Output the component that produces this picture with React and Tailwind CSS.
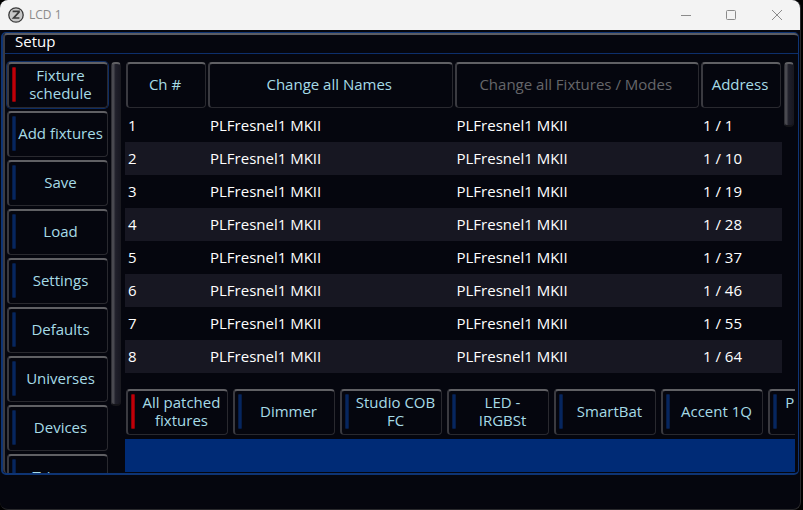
import React, { useState } from 'react';
import clsx from 'clsx';

const menuItems = [
  'Fixture schedule',
  'Add fixtures',
  'Save',
  'Load',
  'Settings',
  'Defaults',
  'Universes',
  'Devices',
  'Triggers',
];

const filters = [
  'All patched fixtures',
  'Dimmer',
  'Studio COB FC',
  'LED - IRGBSt',
  'SmartBat',
  'Accent 1Q',
  'PLFresnel1 MKII',
];

const fixtures = [1, 10, 19, 28, 37, 46, 55, 64, 73].map((address, i) => ({
  channel: i + 1,
  name: 'PLFresnel1 MKII',
  type: 'PLFresnel1 MKII',
  address: `1 / ${address}`,
}));

const PanelButton = ({ children, className, marker, active, focused, ...props }) => (
  <button
    type="button"
    className={clsx(
      'relative flex h-[46px] shrink-0 items-center justify-center rounded-[4px] border-t-2 border-r border-b border-l-2 border-t-[#606064] border-r-[#29292f] border-b-[#29292f] border-l-[#3a3a40] pb-1 text-center leading-[18px] text-[#a6dbe6] disabled:text-[#66666a]',
      focused && 'border-r-[#12397c] border-b-[#12397c] shadow-[0_0_0_1px_#0d2c63]',
      className
    )}
    {...props}
  >
    {marker && (
      <span
        className={clsx(
          'absolute top-[3px] bottom-[5px] left-[3px] w-1 rounded-[1px] border',
          active ? 'border-[#8c0008] bg-[#c00008]' : 'border-[#061c46] bg-[#06265f]'
        )}
      />
    )}
    {children}
  </button>
);

const ScrollThumb = ({ className }) => (
  <div
    className={clsx(
      'w-[10px] shrink-0 rounded-[4px] border-t-2 border-r border-b-2 border-l border-t-[#606064] border-r-[#1a1a20] border-b-[#15151a] border-l-[#303036] bg-linear-to-r from-[#494950] from-20% via-[#20202b] via-45% to-[#191923]',
      className
    )}
  />
);

const TitleBar = () => (
  <header className="flex h-[30px] shrink-0 items-center rounded-t-lg bg-[#f3f3f3] pl-2 text-[#8b8b8b]">
    <svg width="16" height="16" viewBox="0 0 16 16" aria-hidden="true">
      <circle cx="8" cy="8" r="7.2" fill="#c8c8c8" stroke="#3a3a3a" strokeWidth="1.3" />
      <path d="M4.6 4.3h6.4v.8L5.6 11h5.8" fill="none" stroke="#3a3a3a" strokeWidth="1.7" />
    </svg>
    <span className="ml-[5px] flex-1 text-xs">LCD 1</span>
    <button type="button" aria-label="Minimize" className="flex h-full w-[45px] items-center justify-center">
      <svg width="12" height="12" viewBox="0 0 12 12" fill="none" stroke="currentColor">
        <path d="M1 6.5h10" />
      </svg>
    </button>
    <button type="button" aria-label="Maximize" className="flex h-full w-[45px] items-center justify-center">
      <svg width="12" height="12" viewBox="0 0 12 12" fill="none" stroke="currentColor">
        <rect x="1.5" y="1.5" width="9" height="9" rx="1" />
      </svg>
    </button>
    <button type="button" aria-label="Close" className="flex h-full w-[47px] items-center justify-center">
      <svg width="12" height="12" viewBox="0 0 12 12" fill="none" stroke="currentColor">
        <path d="M1 1l10 10M11 1L1 11" />
      </svg>
    </button>
  </header>
);

const FixtureTable = () => (
  <table className="w-full table-fixed border-collapse text-left text-white">
    <colgroup>
      <col className="w-[82px]" />
      <col />
      <col />
      <col className="w-[82px]" />
    </colgroup>
    <thead>
      <tr>
        <th className="px-px pb-px font-normal">
          <PanelButton className="w-full pr-[3px]">Ch #</PanelButton>
        </th>
        <th className="px-px pb-px font-normal">
          <PanelButton className="w-full pr-[3px]">Change all Names</PanelButton>
        </th>
        <th className="px-px pb-px font-normal">
          <PanelButton className="w-full pr-[3px]" disabled>Change all Fixtures / Modes</PanelButton>
        </th>
        <th className="px-px pb-px font-normal">
          <PanelButton className="w-full pr-[3px]">Address</PanelButton>
        </th>
      </tr>
    </thead>
    <tbody>
      {fixtures.map((fixture) => (
        <tr key={fixture.channel} className="h-[33px] even:bg-[#171722]">
          <td className="px-[3px]">{fixture.channel}</td>
          <td className="px-[3px]">{fixture.name}</td>
          <td className="px-[3px]">{fixture.type}</td>
          <td className="px-[3px]">{fixture.address}</td>
        </tr>
      ))}
    </tbody>
  </table>
);

const App = () => {
  const [page, setPage] = useState('Fixture schedule');
  const [filter, setFilter] = useState('All patched fixtures');

  return (
    <div className="h-screen bg-black pr-[2px] font-['Open_Sans',sans-serif] text-[15px]">
      <div className="flex h-full flex-col rounded-lg border-r border-b border-[#29292c] bg-[#05060e]">
        <TitleBar />

        <main className="mx-px mt-[2px] mb-[34px] flex min-h-0 flex-1 flex-col rounded-[5px] border border-b-2 border-l-2 border-[#0e3474]">
          <div className="flex min-h-0 flex-1 flex-col rounded-[4px] border-t-2 border-l-2 border-t-[#5c5d63] border-l-[#3a3b43]">
            <h1 className="h-[19px] shrink-0 border-b border-[#0d2f6c] pl-[10px] leading-[12px] text-white">Setup</h1>

            <div className="flex min-h-0 flex-1 pt-2 pr-[3px] pb-px pl-[2px]">
              <nav className="flex w-[101px] shrink-0 flex-col gap-[3px] overflow-clip [overflow-clip-margin:1px]">
                {menuItems.map((item) => (
                  <PanelButton
                    key={item}
                    marker
                    className="pl-[5px]"
                    active={item === page}
                    focused={item === page}
                    onClick={() => setPage(item)}
                  >
                    {item}
                  </PanelButton>
                ))}
              </nav>
              <ScrollThumb className="ml-[3px] h-[344px]" />

              <section className="ml-1 flex min-w-0 flex-1 flex-col">
                <div className="flex min-h-0 flex-1 overflow-hidden">
                  <div className="min-w-0 flex-1">
                    <FixtureTable />
                  </div>
                  <ScrollThumb className="mr-px ml-[2px] h-[65px]" />
                </div>

                <div className="mt-[5px] flex shrink-0 gap-[5px] overflow-hidden pl-px">
                  {filters.map((item) => (
                    <PanelButton
                      key={item}
                      marker
                      className="w-[102px] pr-1 pl-3"
                      active={item === filter}
                      onClick={() => setFilter(item)}
                    >
                      {item}
                    </PanelButton>
                  ))}
                </div>

                <div className="mt-1 h-[33px] shrink-0 bg-[#002b76]" />
              </section>
            </div>
          </div>
        </main>
      </div>
    </div>
  );
};

export default App;
